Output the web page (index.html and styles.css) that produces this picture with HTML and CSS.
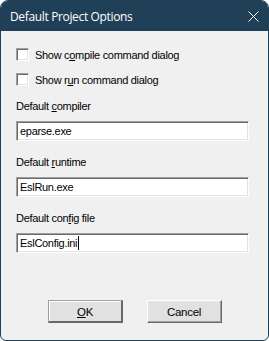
FILE: index.html
```html
<!DOCTYPE html>
<html lang="en">
<head>
<meta charset="UTF-8">
<title>Default Project Options</title>
<link rel="stylesheet" href="styles.css">
</head>
<body>
<div class="window">
  <div class="titlebar">
    <span class="title">Default Project Options</span>
    <svg class="close" width="11" height="11" viewBox="0 0 11 11">
      <path d="M0.5 0.5 L10.5 10.5 M10.5 0.5 L0.5 10.5" stroke="#fff" stroke-width="1"/>
    </svg>
  </div>
  <div class="content">
    <label class="check"><span class="box"></span>Show c<u>o</u>mpile command dialog</label>
    <label class="check"><span class="box"></span>Show r<u>u</u>n command dialog</label>

    <div class="field">
      <div class="label">Default <u>c</u>ompiler</div>
      <div class="edit">eparse.exe</div>
    </div>
    <div class="field">
      <div class="label">Default <u>r</u>untime</div>
      <div class="edit">EslRun.exe</div>
    </div>
    <div class="field">
      <div class="label">Default con<u>f</u>ig file</div>
      <div class="edit">EslConfig.ini<span class="caret"></span></div>
    </div>

    <div class="buttons">
      <div class="btn default"><u>O</u>K</div>
      <div class="btn">Cancel</div>
    </div>
  </div>
</div>
</body>
</html>
```

FILE: styles.css
```css
body {
  margin: 0;
  background: #ffffff;
  font-family: "Liberation Sans", Arial, sans-serif;
  font-size: 11px;
  letter-spacing: -0.3px;
  color: #000;
}
.window {
  width: 269px;
  height: 341px;
  box-sizing: border-box;
  border: 1px solid #1f4056;
  border-radius: 8px 8px 6px 6px;
  background: #f0f0f0;
  display: flex;
  flex-direction: column;
  overflow: hidden;
}
.titlebar {
  height: 30px;
  flex: none;
  background: #1f4056;
  display: flex;
  align-items: center;
  padding: 0 9px 0 9px;
}
.title {
  flex: 1;
  color: #fff;
  font-family: "Open Sans", "Noto Sans", sans-serif;
  font-size: 12px;
  letter-spacing: -0.35px;
}
.close {
  display: block;
}
.content {
  flex: 1;
  display: flex;
  flex-direction: column;
  padding: 17px 0 0 15px;
}
.check {
  display: flex;
  align-items: center;
  height: 13px;
  margin-bottom: 12px;
}
.box {
  width: 13px;
  height: 13px;
  box-sizing: border-box;
  background: #fff;
  border-top: 1px solid #a0a0a0;
  border-left: 1px solid #a0a0a0;
  border-right: 1px solid #fff;
  border-bottom: 1px solid #fff;
  box-shadow: inset 1px 1px 0 #696969, inset -1px -1px 0 #e3e3e3;
  margin-right: 6px;
}
.field {
  margin-top: 2px;
}
.field + .field {
  margin-top: 15px;
}
.label {
  height: 13px;
  line-height: 13px;
  margin-bottom: 8px;
}
.edit {
  width: 233px;
  height: 20px;
  box-sizing: border-box;
  background: #fff;
  border-top: 1px solid #a0a0a0;
  border-left: 1px solid #a0a0a0;
  border-right: 1px solid #fff;
  border-bottom: 1px solid #fff;
  box-shadow: inset 1px 1px 0 #696969, inset -1px -1px 0 #e3e3e3;
  padding: 0 0 0 3px;
  display: flex;
  align-items: center;
}
.caret {
  display: inline-block;
  width: 1px;
  height: 14px;
  margin-left: 1px;
  background: #000;
}
.buttons {
  display: flex;
  justify-content: center;
  gap: 24px;
  margin-top: auto;
  margin-bottom: 17px;
  padding-right: 15px;
}
.btn {
  width: 75px;
  height: 23px;
  box-sizing: border-box;
  background: #e1e1e1;
  border-top: 1px solid #fff;
  border-left: 1px solid #fff;
  border-right: 1px solid #696969;
  border-bottom: 1px solid #696969;
  box-shadow: inset -1px -1px 0 #a0a0a0, inset 1px 1px 0 #e3e3e3;
  display: flex;
  align-items: center;
  justify-content: center;
  font-size: 11.5px;
}
.btn.default {
  border: 1px solid #696969;
  border-top-color: #a0a0a0;
  border-left-color: #a0a0a0;
  box-shadow: inset -1px -1px 0 #696969, inset 1px 1px 0 #fff;
}
```
